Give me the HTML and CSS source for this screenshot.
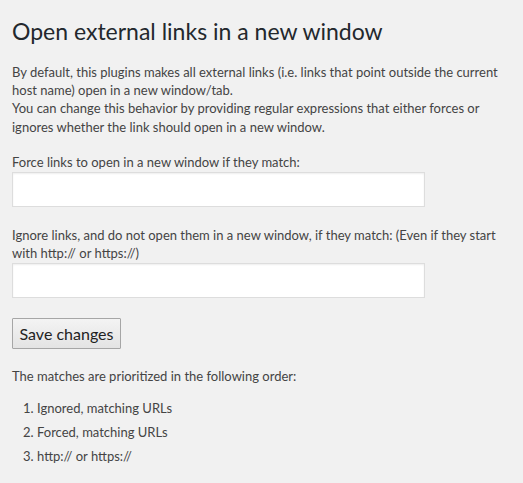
FILE: index.html
```html
<!DOCTYPE html>
<html>
<head>
<meta charset="utf-8">
<link rel="stylesheet" href="styles.css">
</head>
<body>
<div class="wrap">
  <h1 class="title">Open external links in a new window</h1>
  <p class="intro">By default, this plugins makes all external links (i.e. links that point outside the current host name) open in a new window/tab.<br>You can change this behavior by providing regular expressions that either forces or ignores whether the link should open in a new window.</p>
  <form class="form">
    <label class="field">
      <span class="label">Force links to open in a new window if they match:</span>
      <input class="input" type="text">
    </label>
    <label class="field">
      <span class="label">Ignore links, and do not open them in a new window, if they match: (Even if they start with http:// or https://)</span>
      <input class="input" type="text">
    </label>
    <div class="actions"><button type="button" class="button">Save changes</button></div>
  </form>
  <p class="order">The matches are prioritized in the following order:</p>
  <ol class="list">
    <li>Ignored, matching URLs</li>
    <li>Forced, matching URLs</li>
    <li>http:// or https://</li>
  </ol>
</div>
</body>
</html>
```
FILE: styles.css
```css
html, body {
  margin: 0;
  padding: 0;
  background: #f1f1f1;
}
body {
  font-family: Lato, "Open Sans", sans-serif;
  font-size: 13px;
  line-height: 18.2px;
  color: #444;
}
.wrap {
  padding: 17px 12px 0 12px;
}
.title {
  margin: 0;
  font-size: 23px;
  font-weight: 400;
  line-height: 29px;
  color: #23282d;
}
.intro {
  margin: 17px 0 0 0;
}
.form {
  display: flex;
  flex-direction: column;
}
.field {
  display: flex;
  flex-direction: column;
  margin-top: 17px;
}
.field + .field {
  margin-top: 19px;
}
.label {
  display: block;
  margin-bottom: 1px;
}
.input {
  box-sizing: border-box;
  width: 413px;
  height: 35px;
  margin: 0;
  border: 1px solid #ddd;
  background: #fff;
  box-shadow: inset 0 1px 2px rgba(0,0,0,0.07);
  font: inherit;
}
.actions {
  margin-top: 20px;
}
.button {
  box-sizing: border-box;
  height: 31px;
  width: 109px;
  padding: 0;
  border: 1px solid #a6a6a6;
  border-radius: 1px;
  background: linear-gradient(#f3f3f3, #e4e4e4);
  font-family: inherit;
  font-size: 16px;
  color: #222;
}
.order {
  margin: 18px 0 0 0;
}
.list {
  margin: 13px 0 0 0;
  padding-left: 25px;
}
.list li {
  margin-bottom: 6px;
}
```
